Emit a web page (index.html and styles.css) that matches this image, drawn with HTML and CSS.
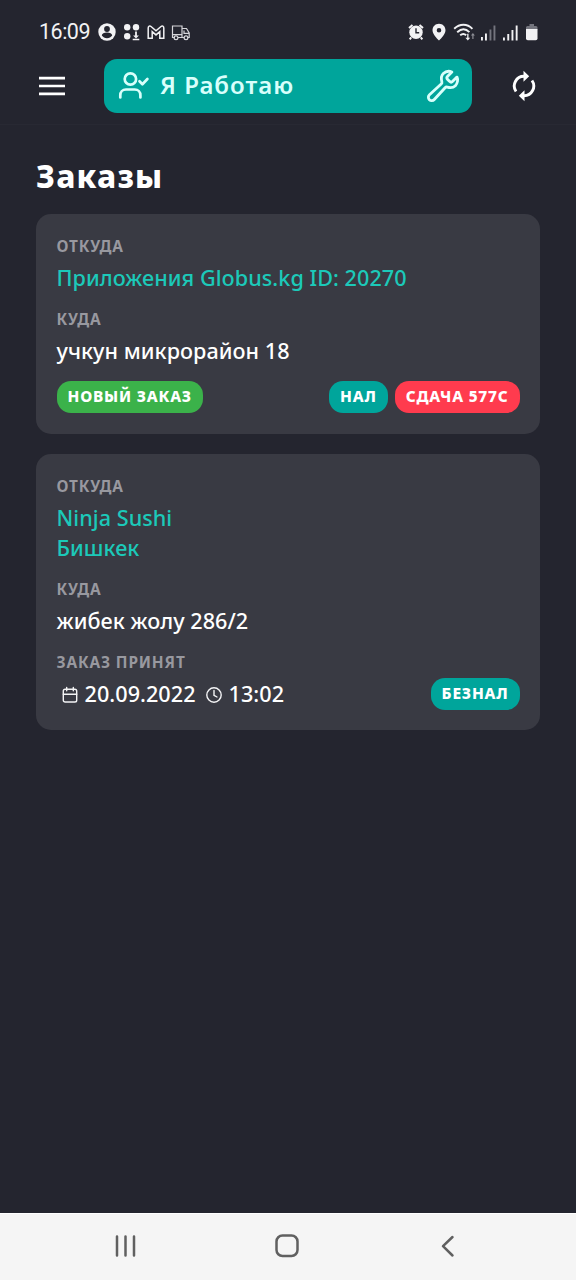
FILE: index.html
```html
<!DOCTYPE html>
<html lang="ru">
<head>
<meta charset="utf-8">
<title>Заказы</title>
<link rel="stylesheet" href="styles.css">
</head>
<body>
<div class="app">
  <div class="status">
    <span class="clock">16:09</span>
    <svg class="status-left" width="96" height="20" viewBox="0 0 96 20" fill="#f2f2f4">
      <circle cx="9" cy="10" r="8.7"/>
      <g fill="#24252f"><circle cx="9" cy="7" r="2.9"/><path d="M3.8 13.6c0-2 2.4-3 5.2-3s5.2 1 5.2 3c-1.200 1.700-3 2.600-5.200 2.600s-4-.9-5.200-2.600z"/></g>
      <circle cx="29.200" cy="5.300" r="3.200"/><circle cx="38" cy="5.300" r="3.200"/><circle cx="29.200" cy="14.300" r="3.200"/>
      <path d="M37.100 9.500h1.800v4h2l-2.900 3-2.900-3h2zM34.700 16.700h6.600v1.500h-6.600z"/>
      <path d="M50.200 16.200v-10.200c0-2 1.600-2.500 2.800-1.500l5 4.300 5-4.300c1.200-1 2.800-.5 2.800 1.500v10.200h-4v-6.600l-3.800 3.300-3.800-3.300v6.600z" fill="none" stroke="#f2f2f4" stroke-width="1.500"/>
      <g fill="none" stroke="#d6d6da" stroke-width="1.200"><path d="M77 15.500h-2.500v-11.500h9.500v11.500h-4M74.500 12.700h9.500M84 6.500h4.500l2.700 4.500v4.500h-1.700M84 15.500h2.500M86 8.500v2.800h5"/><circle cx="78" cy="15.800" r="1.900"/><circle cx="88" cy="15.800" r="1.900"/></g>
    </svg>
    <svg class="status-right" width="134" height="20" viewBox="0 0 134 20" fill="#f2f2f4">
      <circle cx="10" cy="10.300" r="6.700"/>
      <path d="M3 6l3.500-3M17 6l-3.500-3M5.200 15.300l-1.500 2M14.800 15.300l1.500 2" stroke="#f2f2f4" stroke-width="2" fill="none"/>
      <path d="M10 6.300v4.400h3.200" stroke="#24252f" stroke-width="1.400" fill="none"/>
      <path d="M33 1.800c-3.800 0-6.500 2.900-6.500 6.500 0 4.400 6.500 10.300 6.500 10.300s6.500-5.900 6.500-10.300c0-3.600-2.700-6.500-6.500-6.500zm0 4.200a2.300 2.300 0 1 1 0 4.600 2.300 2.300 0 0 1 0-4.600z" fill-rule="evenodd"/>
      <g fill="none" stroke="#f2f2f4" stroke-width="1.900"><path d="M48.200 6.800c5.500-5.400 13-5.400 18.200 0M51.200 10.200c4-3.700 8.600-3.700 12.200 0M54.200 13.300c2-1.700 4.200-1.700 6 0"/></g>
      <path d="M61.200 11.700h1.300v4h1.700l-2.400 2.700-2.400-2.700h1.800z"/>
      <path d="M66.300 17v-3.600h-1.400l2-2.500 2 2.500h-1.400v3.600z" fill="#8d8e95"/>
      <path d="M75 15h1.900v3.500H75zM79 11.500h1.900v7H79z"/>
      <path d="M83.500 7.500h1.900v11h-1.900zM87.500 3.500h1.900v15h-1.900z" fill="#74757e"/>
      <path d="M97 15.500h1.900v3H97zM101.300 12h1.900v6.500h-1.900zM105.500 8h1.900v10.500h-1.900zM109.700 3.500h1.900v15h-1.900z"/>
      <path d="M123.500 2h4.500v2h2q1.500 0 1.500 1.500v2h-11.500v-2q0-1.500 1.500-1.500h2z" fill="#74757e"/>
      <path d="M120 7h11.500v9.500q0 1.800-1.800 1.800h-7.900q-1.800 0-1.800-1.800z"/>
    </svg>
  </div>
  <header class="header">
    <svg class="menu" width="28" height="22" viewBox="0 0 28 22"><path d="M1 3.200h26M1 11h26M1 18.800h26" stroke="#fff" stroke-width="2.700"/></svg>
    <div class="work">
      <svg class="worker" width="32" height="30" viewBox="0 0 32 30" fill="none" stroke="#d8fffb" stroke-width="2.700" stroke-linecap="round" stroke-linejoin="round"><circle cx="12.400" cy="8" r="5.700"/><path d="M2.300 26.500v-2.300c0-3.200 2.300-5.700 5.700-5.700h8.700c3.400 0 5.700 2.500 5.700 5.700v2.300M21.500 10.300l2.900 2.900 5-5.200"/></svg>
      <span class="work-text">Я Работаю</span>
      <svg class="wrench" width="36" height="36" viewBox="0 0 512 512" fill="none" stroke="#d8fffb" stroke-width="40" stroke-linecap="round" stroke-linejoin="round"><path d="M393.870 190a32.100 32.100 0 0 1-45.250 0l-26.570-26.570a32.090 32.090 0 0 1 0-45.260L382.190 58a1 1 0 0 0-.3-1.640c-38.820-16.640-89.150-8.160-121.110 23.570-30.580 30.350-32.320 76-21.120 115.840a31.930 31.930 0 0 1-9.060 32.080L64 380a48.170 48.170 0 1 0 68 68l153.860-167a31.930 31.930 0 0 1 31.600-9.130c39.540 10.590 84.540 8.600 114.720-21.190 32.490-32 39.500-88.560 23.750-120.930a1 1 0 0 0-1.600-.26z"/></svg>
    </div>
    <svg class="refresh" width="26" height="32" viewBox="0 0 26 32"><g fill="none" stroke="#fff" stroke-width="2.900"><path d="M5 21.500a9.700 9.700 0 0 1 8-15.200M21 10.500a9.700 9.700 0 0 1-8 15.200"/></g><path d="M12.500.8l5.700 5.500-5.700 5.500zM13.500 20.200l-5.700 5.500 5.700 5.500z" fill="#fff"/></svg>
  </header>
  <main class="content">
    <h1 class="title">Заказы</h1>
    <section class="card">
      <div class="label">ОТКУДА</div>
      <div class="value from">Приложения Globus.kg ID: 20270</div>
      <div class="label">КУДА</div>
      <div class="value">учкун микрорайон 18</div>
      <div class="tags"><span class="tag green">НОВЫЙ ЗАКАЗ</span><span class="tag teal push">НАЛ</span><span class="tag red">СДАЧА 577С</span></div>
    </section>
    <section class="card">
      <div class="label">ОТКУДА</div>
      <div class="value from">Ninja Sushi<br>Бишкек</div>
      <div class="label">КУДА</div>
      <div class="value">жибек жолу 286/2</div>
      <div class="label">ЗАКАЗ ПРИНЯТ</div>
      <div class="accepted">
        <svg class="calendar" width="16" height="18" viewBox="0 0 16 18" fill="none" stroke="#f4f4f6" stroke-width="1.400" stroke-linecap="round"><rect x="1.300" y="3.300" width="13.400" height="12.700" rx="1.800"/><path d="M1.300 8.300h13.400M4.700 1.500v3.200M11.300 1.500v3.200"/></svg>
        <span class="date">20.09.2022</span>
        <svg class="time-icon" width="18" height="18" viewBox="0 0 18 18" fill="none" stroke="#f4f4f6" stroke-width="1.400" stroke-linecap="round"><circle cx="9" cy="9" r="7.200"/><path d="M9 4.500v4.800l3 1.700"/></svg>
        <span class="time">13:02</span>
        <span class="tag teal push">БЕЗНАЛ</span>
      </div>
    </section>
  </main>
  <nav class="nav">
    <svg width="24" height="24" viewBox="0 0 24 24"><path d="M3 2.500v19M11.500 2.500v19M20 2.500v19"/></svg>
    <svg width="24" height="24" viewBox="0 0 24 24"><rect x="1.500" y="1.500" width="21" height="20.500" rx="6"/></svg>
    <svg width="24" height="24" viewBox="0 0 24 24"><path d="M16.500 3l-9.500 9.200 9.500 9.300"/></svg>
  </nav>
</div>
</body>
</html>
```

FILE: styles.css
```css
* { box-sizing: border-box; }
body { margin: 0; background: #24252f; color: #fff; font-family: "Noto Sans", sans-serif; }
.app { width: 576px; height: 1280px; display: flex; flex-direction: column; overflow: hidden; }
.status { height: 54px; padding: 10px 36px 0 39px; display: flex; align-items: center; flex: none; }
.clock { font-family: Roboto, sans-serif; font-size: 21.500px; line-height: 24px; color: #f2f2f4; letter-spacing: -.5px; }
.status-left { margin-left: 8px; }
.status-right { margin-left: auto; }
.header { height: 71px; flex: none; padding: 5px 38px 0; display: flex; align-items: flex-start; border-bottom: 1px solid #282933; }
.menu { margin: 16px 0 0; }
.work { width: 368px; height: 54px; margin-left: 38px; border-radius: 13px; background: #00a59b; display: flex; align-items: center; padding: 0 11px 0 14px; }
.work-text { margin: -2px 0 0 10px; font-size: 24px; font-weight: 600; color: #d8fffb; letter-spacing: 1px; line-height: 32px; }
.wrench { margin-left: auto; }
.refresh { margin: 11px 0 0 39px; }
.content { flex: 1; padding: 29px 36px 0; }
.title { margin: 0 0 16px; font-size: 31.500px; line-height: 44px; font-weight: 800; letter-spacing: 1.200px; }
.card { background: #393a43; border-radius: 15px; padding: 22px 20.500px 20.500px; margin-bottom: 20.500px; display: flex; flex-direction: column; }
.label { font-size: 15.400px; line-height: 21px; font-weight: 700; letter-spacing: .85px; color: #98989f; margin-bottom: 6px; }
.value { font-size: 21.600px; line-height: 30px; font-weight: 500; letter-spacing: .050px; margin-bottom: 16px; }
.from { color: #1cc9b9; }
.tags, .accepted { display: flex; align-items: center; height: 32px; }
.tags { margin-top: -1px; }
.tag { height: 32px; line-height: 31px; border-radius: 14px; padding: 0 11px; font-size: 15.400px; font-weight: 800; letter-spacing: .8px; }
.green { background: #3bb24a; }
.teal { background: #00a59b; }
.red { background: #ff3b4e; margin-left: 7px; }
.push { margin-left: auto; }
.accepted { margin-top: -1.500px; font-size: 21.600px; font-weight: 500; letter-spacing: .050px; }
.calendar { margin: 2px 0 0 5px; }
.date { margin-left: 7px; padding-bottom: 1px; }
.time-icon { margin: 2px 0 0 9px; }
.time { margin-left: 6px; padding-bottom: 1px; }
.nav { height: 67px; flex: none; background: #f5f5f5; border-top: 1px solid #fff; padding: 0 116px 2px 114px; display: flex; align-items: center; justify-content: space-between; }
.nav svg { fill: none; stroke: #606060; stroke-width: 2.500px; stroke-linecap: round; stroke-linejoin: round; }
```
